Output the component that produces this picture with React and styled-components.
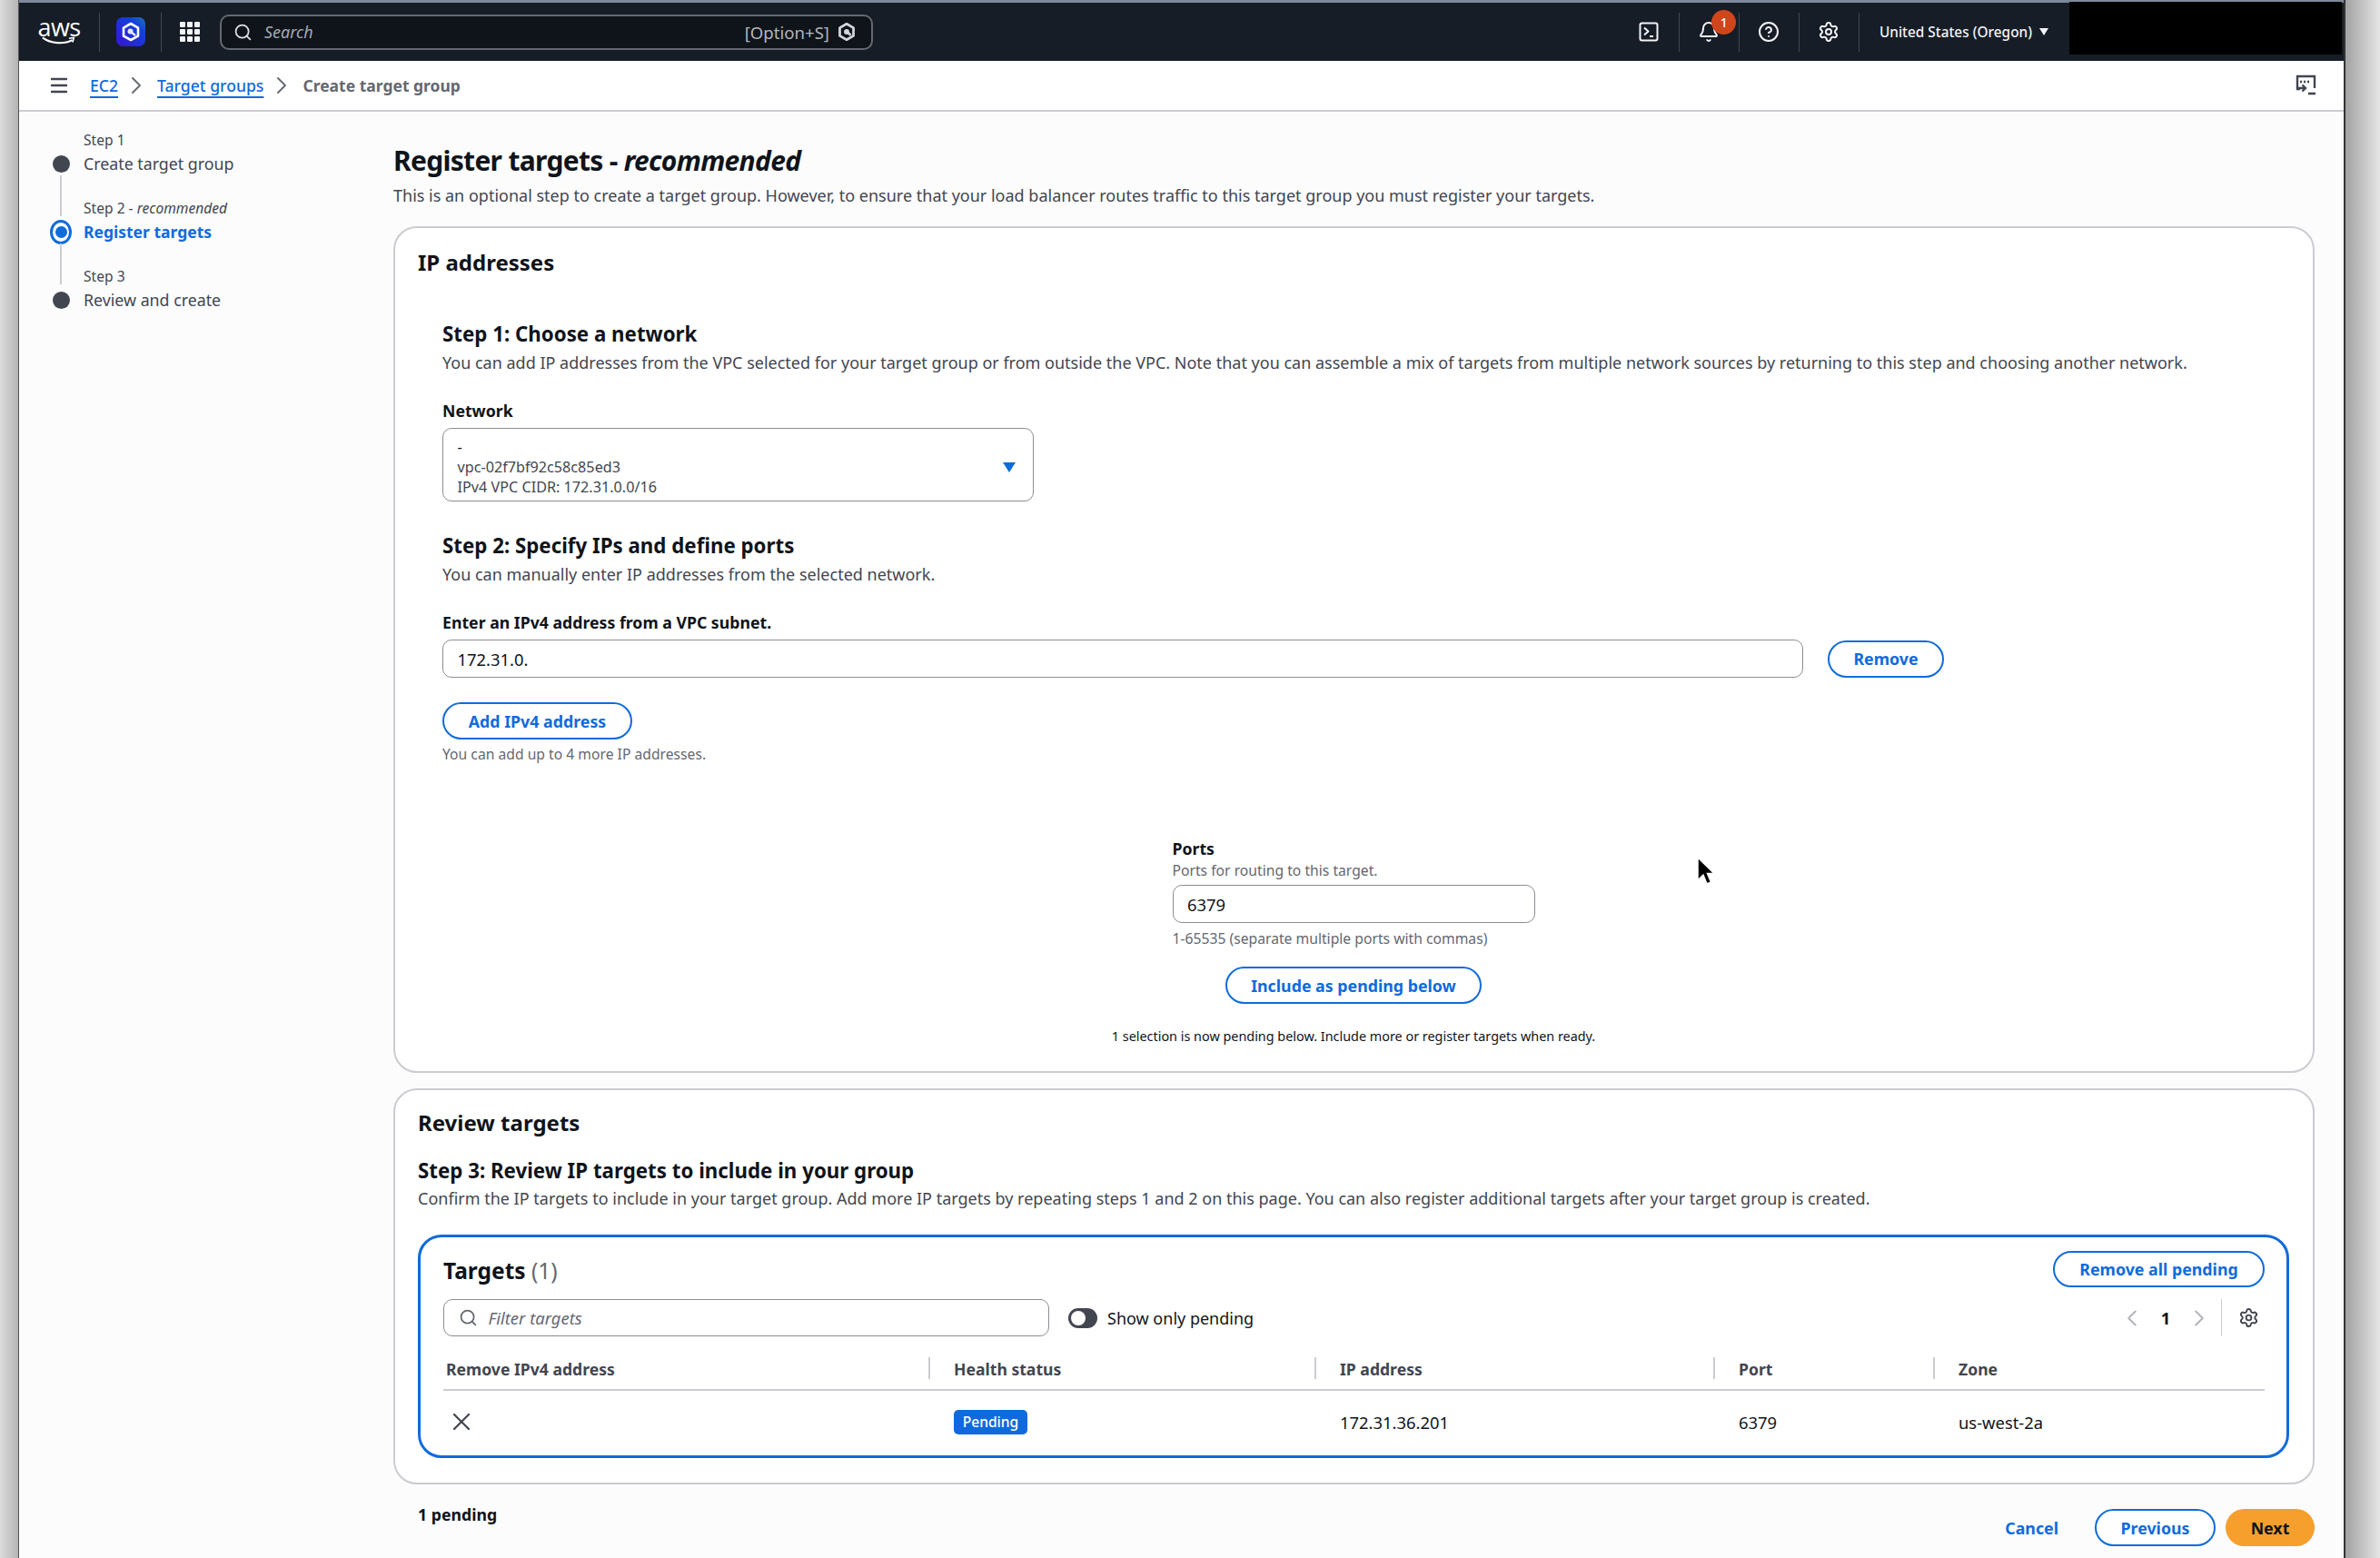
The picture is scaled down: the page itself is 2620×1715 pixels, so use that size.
import React from "react";
import styled, { createGlobalStyle } from "styled-components";
import { Search, Bell, CircleHelp, Settings, ChevronLeft, ChevronRight, X, Menu } from "lucide-react";

const GlobalStyle = createGlobalStyle`
  html, body {
    margin: 0;
    padding: 0;
    width: 2620px;
    height: 1715px;
    overflow: hidden;
    background: #fff;
    font-family: "Noto Sans", "Open Sans", sans-serif;
    color: #0f141a;
  }
  * { box-sizing: border-box; }
`;

const BLUE = "#0f6bdc";
const BORDER = "#cbcbd1";

const Page = styled.div`
  display: flex;
  width: 2620px;
  height: 1715px;
  overflow: hidden;
  position: relative;
`;

const LeftEdge = styled.div`
  width: 21px;
  background: linear-gradient(90deg, #dcdcdc, #b4b4b4);
  border-right: 1px solid #555;
`;

const RightEdge = styled.div`
  width: 40px;
  background: linear-gradient(90deg, #a2a2a2, #e6e6e6);
  border-left: 2px solid #333;
`;

const Window = styled.div`
  flex: 1;
  display: flex;
  flex-direction: column;
  min-width: 0;
  border-top: 3px solid #7d8a9c;
  background: #fcfcfd;
`;

const TopNav = styled.header`
  height: 64px;
  flex: none;
  background: #161d26;
  display: flex;
  align-items: center;
  padding-left: 23px;
  color: #f3f3f7;
`;

const LogoBlock = styled.div`
  width: 42px;
  height: 30px;
  display: flex;
  flex-direction: column;
  align-items: center;
  margin-right: 23px;
`;

const LogoText = styled.span`
  font-family: "Open Sans", sans-serif;
  font-size: 27px;
  line-height: 20px;
  height: 20px;
  letter-spacing: -0.6px;
  color: #fff;
`;

const NavDivider = styled.span`
  width: 1px;
  height: 43px;
  background: #424650;
  flex: none;
`;

const AppIconWrap = styled.span`
  width: 32px;
  height: 32px;
  margin: 0 17px 0 18px;
  flex: none;
  display: flex;
`;

const GridIcon = styled.span`
  display: grid;
  grid-template-columns: repeat(3, 6px);
  grid-auto-rows: 6px;
  gap: 2px;
  margin: 0 22px 0 20px;
  flex: none;

  i {
    background: #f3f3f7;
    border-radius: 1px;
  }
`;

const SearchBox = styled.div`
  width: 719px;
  height: 39px;
  border: 2px solid #656871;
  border-radius: 10px;
  background: #0f141a;
  display: flex;
  align-items: center;
  padding: 0 16px 0 13px;
  gap: 13px;
  color: #c6c6cd;
  font-size: 18px;
`;

const SearchHint = styled.span`
  font-style: italic;
  color: #a4a9b3;
  flex: 1;
`;

const ShortcutHint = styled.span`
  color: #b4b4bb;
  display: flex;
  align-items: center;
  gap: 8px;
  font-size: 18.6px;
`;

const NavRight = styled.div`
  margin-left: auto;
  display: flex;
  align-items: center;
  height: 100%;
`;

const NavIconBox = styled.span`
  width: 65px;
  display: flex;
  justify-content: center;
  align-items: center;
  color: #f3f3f7;
`;

const BellWrap = styled.span`
  display: flex;
  position: relative;
`;

const BellBadge = styled.span`
  position: absolute;
  left: 15px;
  top: -12px;
  width: 27px;
  height: 27px;
  border-radius: 50%;
  background: #d0451b;
  color: #fff;
  font-size: 14px;
  line-height: 27px;
  text-align: center;
  font-weight: 500;
`;

const RegionLabel = styled.span`
  display: flex;
  align-items: center;
  gap: 8px;
  margin: 0 23px 0 22px;
  font-size: 15.4px;
  color: #f3f3f7;
  font-weight: 500;
`;

const Caret = styled.i`
  width: 0;
  height: 0;
  border-left: 5px solid transparent;
  border-right: 5px solid transparent;
  border-top: 8px solid #f3f3f7;
`;

const Redacted = styled.div`
  width: 300px;
  height: 58px;
  background: #000;
  margin-right: 2px;
  margin-top: -1px;
  align-self: flex-start;
`;

const BreadcrumbBar = styled.div`
  height: 56px;
  flex: none;
  background: #fff;
  border-bottom: 2px solid ${BORDER};
  display: flex;
  align-items: center;
  padding: 0 29px 0 32px;
  color: #424650;
`;

const MenuButton = styled.span`
  display: flex;
  color: #424650;
  margin-right: 22px;
`;

const CrumbLink = styled.a`
  color: ${BLUE};
  font-size: 17.6px;
  text-decoration: underline;
  text-underline-offset: 5px;
  text-decoration-thickness: 1.5px;
  font-weight: 500;
`;

const CrumbSep = styled.span`
  display: flex;
  color: #656871;
  margin: 0 7px 0 4px;
`;

const CrumbCurrent = styled.span`
  font-size: 17.5px;
  font-weight: 700;
  color: #656871;
`;

const CrumbEnd = styled.span`
  margin-left: auto;
  display: flex;
`;

const Body = styled.div`
  flex: 1;
  display: flex;
  min-height: 0;
`;

const Sidebar = styled.nav`
  width: 412px;
  flex: none;
  padding: 21px 0 0 34px;
`;

const StepRow = styled.div`
  display: grid;
  grid-template-columns: 24px 1fr;
  grid-template-rows: 23px 26px 26px;
  column-gap: 13px;
`;

const StepSmall = styled.span`
  grid-column: 2;
  grid-row: 1;
  font-size: 15.6px;
  line-height: 20px;
  color: #424650;

  em {
    font-size: 15.6px;
  }
`;

const StepName = styled.span`
  grid-column: 2;
  grid-row: 2;
  font-size: ${(p) => (p.$active ? "17.5px" : "17.8px")};
  line-height: 26px;
  color: ${(p) => (p.$active ? BLUE : "#424650")};
  font-weight: ${(p) => (p.$active ? 700 : 400)};
`;

const StepDotCell = styled.span`
  grid-column: 1;
  grid-row: 2;
  display: flex;
  align-items: center;
  justify-content: center;
`;

const Dot = styled.i`
  display: block;
  width: 19px;
  height: 19px;
  border-radius: 50%;
  background: #424650;
`;

const ActiveDot = styled.i`
  display: flex;
  align-items: center;
  justify-content: center;
  width: 27px;
  height: 27px;
  border-radius: 50%;
  border: 3px solid ${BLUE};

  &::after {
    content: "";
    width: 13px;
    height: 13px;
    border-radius: 50%;
    background: ${BLUE};
  }
`;

const Connector = styled.i`
  grid-column: 1;
  grid-row: ${(p) => p.$row};
  justify-self: center;
  width: 2px;
  background: ${BORDER};
  height: ${(p) => (p.$row === 1 ? "19px" : "100%")};
`;

const Main = styled.main`
  flex: 1;
  min-width: 0;
  padding: 35px 32px 0 0;
`;

const PageTitle = styled.h1`
  margin: 0;
  font-size: 30px;
  line-height: 38px;
  font-weight: 700;
  letter-spacing: -0.7px;
  color: #0f141a;

  em {
    font-weight: 700;
  }
`;

const Description = styled.p`
  margin: ${(p) => p.$top ?? 5}px 0 0;
  font-size: 18px;
  line-height: 24px;
  color: #424650;
`;

const Panel = styled.section`
  background: #fff;
  border: 2px solid ${BORDER};
  border-radius: 26px;
  padding: ${(p) => p.$top}px 26px 0 25px;
  height: ${(p) => p.$height}px;
  margin-top: ${(p) => p.$gap}px;
`;

const PanelTitle = styled.h2`
  margin: 0;
  font-size: 24px;
  line-height: 30px;
  font-weight: 700;
  color: #0f141a;
`;

const Indented = styled.div`
  padding-left: 27px;
`;

const StepHeading = styled.h3`
  margin: ${(p) => p.$top}px 0 0;
  font-size: 22.3px;
  line-height: 28px;
  font-weight: 700;
  color: #0f141a;
`;

const FieldLabel = styled.label`
  display: block;
  margin-top: ${(p) => p.$top}px;
  font-size: 17.7px;
  line-height: 22px;
  font-weight: 700;
  color: #0f141a;
`;

const SelectBox = styled.div`
  margin-top: 8px;
  width: 651px;
  height: 81px;
  border: 1.5px solid #8c8c94;
  border-radius: 10px;
  background: #fff;
  padding: 9px 15px 0 15.5px;
  display: flex;
  justify-content: space-between;
  align-items: center;
`;

const SelectLines = styled.div`
  display: flex;
  flex-direction: column;
  align-self: flex-start;
  font-size: 16.2px;
  line-height: 22px;
  color: #424650;

  b {
    font-weight: 400;
    color: #0f141a;
  }
`;

const SelectCaret = styled.i`
  width: 0;
  height: 0;
  border-left: 7px solid transparent;
  border-right: 7px solid transparent;
  border-top: 11px solid ${BLUE};
  margin: -3px 4px 0 0;
`;

const InputRow = styled.div`
  margin-top: 8px;
  display: flex;
  align-items: center;
  gap: 27px;
`;

const TextField = styled.div`
  width: ${(p) => p.$width}px;
  height: 42px;
  border: 1.5px solid #8c8c94;
  border-radius: 10px;
  background: #fff;
  padding: 0 15.5px;
  display: flex;
  align-items: center;
  font-size: 18.4px;
  color: #0f141a;
  margin-top: ${(p) => p.$top ?? 0}px;
  flex: none;
`;

const PillButton = styled.button`
  height: ${(p) => p.$height ?? 41}px;
  width: ${(p) => p.$width}px;
  border: 2px solid ${BLUE};
  border-radius: 22px;
  background: #fff;
  color: ${BLUE};
  font-family: inherit;
  font-size: 17.8px;
  font-weight: 700;
  padding: 0;
  flex: none;
  margin-top: ${(p) => p.$top ?? 0}px;
`;

const Helper = styled.p`
  margin: ${(p) => p.$top}px 0 0;
  font-size: 15.7px;
  line-height: 20px;
  color: #656871;
`;

const PortsSection = styled.div`
  display: flex;
  flex-direction: column;
  align-items: flex-start;
  width: 399px;
  margin: 83px auto 0;
`;

const PortsLabel = styled.label`
  font-size: 17.7px;
  line-height: 22px;
  font-weight: 700;
`;

const IncludeRow = styled.div`
  display: flex;
  justify-content: center;
  margin-top: 21px;
`;

const PendingNote = styled.p`
  margin: 26px 0 0;
  text-align: center;
  font-size: 14.4px;
  line-height: 20px;
  color: #0f141a;
`;

const TargetsBox = styled.div`
  margin-top: 28px;
  height: 246px;
  border: 3px solid ${BLUE};
  border-radius: 26px;
  padding: 15px 24px 0 25px;
  background: #fff;
`;

const TargetsHead = styled.div`
  display: flex;
  justify-content: space-between;
  align-items: center;
  height: 40px;
`;

const TargetsTitle = styled.div`
  font-size: 24.5px;
  line-height: 30px;
  font-weight: 700;
  margin-top: 4px;

  span {
    font-weight: 400;
    color: #656871;
  }
`;

const Toolbar = styled.div`
  margin-top: 13px;
  display: flex;
  align-items: center;
  height: 41px;
`;

const FilterField = styled.div`
  width: 667px;
  height: 41px;
  border: 1.5px solid #8c8c94;
  border-radius: 10px;
  display: flex;
  align-items: center;
  gap: 12px;
  padding: 0 15.5px;
  font-size: 18.4px;
  color: #656871;

  em {
    font-style: italic;
  }
`;

const Toggle = styled.span`
  width: 32px;
  height: 22px;
  border-radius: 11px;
  background: #424650;
  margin: 0 11px 0 21px;
  padding: 3px;
  display: flex;

  &::after {
    content: "";
    width: 16px;
    height: 16px;
    border-radius: 50%;
    background: #fff;
  }
`;

const ToggleLabel = styled.span`
  font-size: 18px;
  color: #0f141a;
`;

const Pager = styled.div`
  margin-left: auto;
  margin-right: 6px;
  display: flex;
  align-items: center;
  height: 41px;
  color: #b4b4bb;
`;

const PageNum = styled.span`
  width: 44px;
  text-align: center;
  color: #0f141a;
  font-size: 18.4px;
  font-weight: 700;
`;

const PagerRule = styled.span`
  width: 1px;
  height: 41px;
  background: ${BORDER};
  margin: 0 18px 0 9px;
`;

const TableGrid = styled.div`
  display: grid;
  grid-template-columns: 534px 425px 439px 242px 365px;
  grid-template-rows: 37px 68px;
  margin-top: 23px;
`;

const HeadCell = styled.div`
  position: relative;
  border-bottom: 2px solid ${BORDER};
  padding: 0 0 0 ${(p) => (p.$first ? 3 : 28)}px;
  height: 37px;
  line-height: 26px;
  font-size: 17.6px;
  font-weight: 700;
  color: #424650;
  display: flex;
  align-items: flex-start;

  &::before {
    content: "";
    display: ${(p) => (p.$first ? "none" : "block")};
    position: absolute;
    left: 0;
    top: 0;
    width: 2px;
    height: 24px;
    background: ${BORDER};
  }
`;

const BodyCell = styled.div`
  display: flex;
  align-items: center;
  padding-left: ${(p) => (p.$first ? 4 : 28)}px;
  font-size: 18.4px;
  color: #0f141a;
`;

const StatusBadge = styled.span`
  width: 81px;
  height: 27px;
  border-radius: 5px;
  background: ${BLUE};
  color: #fff;
  font-size: 15.6px;
  font-weight: 500;
  line-height: 27px;
  text-align: center;
`;

const Footer = styled.div`
  display: flex;
  justify-content: space-between;
  align-items: flex-start;
  margin-top: 22px;
  padding-left: 27px;
`;

const PendingCount = styled.span`
  font-size: 17.7px;
  line-height: 22px;
  font-weight: 700;
`;

const FooterActions = styled.div`
  display: flex;
  align-items: center;
  margin-top: 5px;
`;

const LinkButton = styled.a`
  color: ${BLUE};
  font-size: 17.8px;
  font-weight: 700;
  margin-right: 40px;
`;

const NextButton = styled.button`
  width: 98px;
  height: 41px;
  border: none;
  border-radius: 22px;
  background: #f69f2d;
  color: #0f141a;
  font-family: inherit;
  font-size: 17.8px;
  font-weight: 700;
  margin-left: 11px;
  padding: 0;
`;

const Cursor = styled.svg`
  position: absolute;
  left: 1866px;
  top: 942px;
`;

const HexMark = ({ size, color }) => (
  <svg width={size} height={size} viewBox="0 0 24 24" fill="none">
    <path d="M12 2.5l8.2 4.7v9.6L12 21.5l-8.2-4.7V7.2z" stroke={color} strokeWidth="3" strokeLinejoin="round" />
    <circle cx="12" cy="12" r="3.2" fill={color} />
    <path d="M12 12l5 4" stroke={color} strokeWidth="3" />
  </svg>
);

const AppIcon = () => (
  <svg width="32" height="32" viewBox="0 0 32 32">
    <defs>
      <linearGradient id="appBg" x1="0" y1="1" x2="1" y2="0">
        <stop offset="0" stopColor="#3a12d6" />
        <stop offset="0.7" stopColor="#1240d8" />
        <stop offset="1" stopColor="#1f73b8" />
      </linearGradient>
    </defs>
    <rect width="32" height="32" rx="7" fill="url(#appBg)" />
    <path d="M16 7l8 4.6v9L16 25l-8-4.4v-9z" fill="none" stroke="#fff" strokeWidth="2.6" strokeLinejoin="round" />
    <circle cx="15.5" cy="15.5" r="3" fill="#dfe8ff" />
    <path d="M16 16l5 4" stroke="#dfe8ff" strokeWidth="2.4" />
  </svg>
);

const ShellIcon = () => (
  <svg width="22" height="22" viewBox="0 0 22 22" fill="none" stroke="#f3f3f7" strokeWidth="2">
    <rect x="1.5" y="1.5" width="19" height="19" rx="2" />
    <path d="M6 6.5l4.5 4-4.5 4" strokeLinejoin="round" />
    <path d="M12 16h4" />
  </svg>
);

const PanelIcon = () => (
  <svg width="24" height="24" viewBox="0 0 24 24" fill="none">
    <path d="M21 15V2H2v14h3" stroke="#424650" strokeWidth="2.4" />
    <path d="M5 8h2M9 8h2M13 8h2" stroke="#424650" strokeWidth="2.6" />
    <path d="M3 15h7M7.5 11.5l3.5 3.5-3.5 3.5" stroke="#424650" strokeWidth="2.4" />
    <path d="M14 21h8" stroke="#424650" strokeWidth="2.6" />
  </svg>
);

const steps = [
  { small: <>Step 1</>, name: "Create target group" },
  { small: <>Step 2 - <em>recommended</em></>, name: "Register targets", active: true },
  { small: <>Step 3</>, name: "Review and create" },
];

const columns = ["Remove IPv4 address", "Health status", "IP address", "Port", "Zone"];

export default function App() {
  return (
    <>
      <GlobalStyle />
      <Page>
        <LeftEdge />
        <Window>
          <TopNav>
            <LogoBlock>
              <LogoText>aws</LogoText>
              <svg width="42" height="11" viewBox="0 0 42 11" fill="none">
                <path d="M1 1.5C11 9 27 10 37 4.5" stroke="#fff" strokeWidth="2.4" />
                <path d="M33 2.5l6-.8-1.6 5.4" stroke="#fff" strokeWidth="1.8" />
              </svg>
            </LogoBlock>
            <NavDivider />
            <AppIconWrap><AppIcon /></AppIconWrap>
            <NavDivider />
            <GridIcon>
              {Array.from({ length: 9 }, (_, i) => <i key={i} />)}
            </GridIcon>
            <SearchBox>
              <Search size={21} strokeWidth={2} color="#e0e0e6" />
              <SearchHint>Search</SearchHint>
              <ShortcutHint>
                [Option+S]
                <HexMark size={22} color="#d5d5dc" />
              </ShortcutHint>
            </SearchBox>
            <NavRight>
              <NavIconBox><ShellIcon /></NavIconBox>
              <NavDivider />
              <NavIconBox>
                <BellWrap>
                  <Bell size={24} strokeWidth={2} />
                  <BellBadge>1</BellBadge>
                </BellWrap>
              </NavIconBox>
              <NavDivider />
              <NavIconBox><CircleHelp size={24} strokeWidth={2} /></NavIconBox>
              <NavDivider />
              <NavIconBox><Settings size={24} strokeWidth={2} /></NavIconBox>
              <NavDivider />
              <RegionLabel>United States (Oregon)<Caret /></RegionLabel>
              <Redacted />
            </NavRight>
          </TopNav>

          <BreadcrumbBar>
            <MenuButton><Menu size={24} strokeWidth={2.4} /></MenuButton>
            <CrumbLink>EC2</CrumbLink>
            <CrumbSep><ChevronRight size={32} strokeWidth={1.4} /></CrumbSep>
            <CrumbLink>Target groups</CrumbLink>
            <CrumbSep><ChevronRight size={32} strokeWidth={1.4} /></CrumbSep>
            <CrumbCurrent>Create target group</CrumbCurrent>
            <CrumbEnd><PanelIcon /></CrumbEnd>
          </BreadcrumbBar>

          <Body>
            <Sidebar>
              {steps.map((s, i) => (
                <StepRow key={s.name}>
                  {i > 0 && <Connector $row={1} />}
                  <StepSmall>{s.small}</StepSmall>
                  <StepDotCell>{s.active ? <ActiveDot /> : <Dot />}</StepDotCell>
                  <StepName $active={s.active}>{s.name}</StepName>
                  {i < steps.length - 1 && <Connector $row={3} />}
                </StepRow>
              ))}
            </Sidebar>

            <Main>
              <PageTitle>Register targets - <em>recommended</em></PageTitle>
              <Description $top={7}>
                This is an optional step to create a target group. However, to ensure that your load balancer routes traffic to this target group you must register your targets.
              </Description>

              <Panel $gap={22} $top={23} $height={932}>
                <PanelTitle>IP addresses</PanelTitle>
                <Indented>
                  <StepHeading $top={50}>Step 1: Choose a network</StepHeading>
                  <Description>
                    You can add IP addresses from the VPC selected for your target group or from outside the VPC. Note that you can assemble a mix of targets from multiple network sources by returning to this step and choosing another network.
                  </Description>
                  <FieldLabel $top={30}>Network</FieldLabel>
                  <SelectBox>
                    <SelectLines>
                      <b>-</b>
                      <span>vpc-02f7bf92c58c85ed3</span>
                      <span>IPv4 VPC CIDR: 172.31.0.0/16</span>
                    </SelectLines>
                    <SelectCaret />
                  </SelectBox>
                  <StepHeading $top={35}>Step 2: Specify IPs and define ports</StepHeading>
                  <Description>You can manually enter IP addresses from the selected network.</Description>
                  <FieldLabel $top={30}>Enter an IPv4 address from a VPC subnet.</FieldLabel>
                  <InputRow>
                    <TextField $width={1498}>172.31.0.</TextField>
                    <PillButton $width={128}>Remove</PillButton>
                  </InputRow>
                  <PillButton $width={209} $top={27}>Add IPv4 address</PillButton>
                  <Helper $top={6}>You can add up to 4 more IP addresses.</Helper>
                </Indented>

                <PortsSection>
                  <PortsLabel>Ports</PortsLabel>
                  <Helper $top={3}>Ports for routing to this target.</Helper>
                  <TextField $width={399} $top={6}>6379</TextField>
                  <Helper $top={7}>1-65535 (separate multiple ports with commas)</Helper>
                </PortsSection>
                <IncludeRow>
                  <PillButton $width={282}>Include as pending below</PillButton>
                </IncludeRow>
                <PendingNote>1 selection is now pending below. Include more or register targets when ready.</PendingNote>
              </Panel>

              <Panel $gap={17} $top={21} $height={436}>
                <PanelTitle>Review targets</PanelTitle>
                <StepHeading $top={24}>Step 3: Review IP targets to include in your group</StepHeading>
                <Description $top={4}>
                  Confirm the IP targets to include in your target group. Add more IP targets by repeating steps 1 and 2 on this page. You can also register additional targets after your target group is created.
                </Description>
                <TargetsBox>
                  <TargetsHead>
                    <TargetsTitle>Targets <span>(1)</span></TargetsTitle>
                    <PillButton $width={233} $height={40}>Remove all pending</PillButton>
                  </TargetsHead>
                  <Toolbar>
                    <FilterField>
                      <Search size={21} strokeWidth={2} color="#656871" />
                      <em>Filter targets</em>
                    </FilterField>
                    <Toggle />
                    <ToggleLabel>Show only pending</ToggleLabel>
                    <Pager>
                      <ChevronLeft size={30} strokeWidth={1.6} />
                      <PageNum>1</PageNum>
                      <ChevronRight size={30} strokeWidth={1.6} />
                      <PagerRule />
                      <Settings size={23} strokeWidth={2} color="#424650" />
                    </Pager>
                  </Toolbar>
                  <TableGrid>
                    {columns.map((c, i) => <HeadCell key={c} $first={i === 0}>{c}</HeadCell>)}
                    <BodyCell $first><X size={32} strokeWidth={1.7} color="#424650" /></BodyCell>
                    <BodyCell><StatusBadge>Pending</StatusBadge></BodyCell>
                    <BodyCell>172.31.36.201</BodyCell>
                    <BodyCell>6379</BodyCell>
                    <BodyCell>us-west-2a</BodyCell>
                  </TableGrid>
                </TargetsBox>
              </Panel>

              <Footer>
                <PendingCount>1 pending</PendingCount>
                <FooterActions>
                  <LinkButton>Cancel</LinkButton>
                  <PillButton $width={133}>Previous</PillButton>
                  <NextButton>Next</NextButton>
                </FooterActions>
              </Footer>
            </Main>
          </Body>
        </Window>
        <RightEdge />
        <Cursor width="24" height="36" viewBox="0 0 24 36">
          <path d="M3 2v25l6-6 4 10 4.5-2-4-9.5H21z" fill="#000" stroke="#fff" strokeWidth="1.5" />
        </Cursor>
      </Page>
    </>
  );
}
